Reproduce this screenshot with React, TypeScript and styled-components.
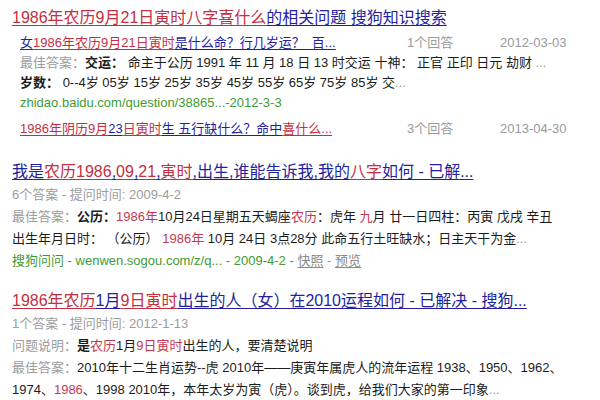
import React from 'react';
import styled, { createGlobalStyle } from 'styled-components';

const GlobalStyle = createGlobalStyle`
  html, body {
    margin: 0;
    padding: 0;
    background: #fff;
  }
  body {
    font-family: "Liberation Sans", "Noto Sans CJK SC", sans-serif;
  }
`;

const Page = styled.div`
  width: 600px;
  height: 400px;
  overflow: hidden;
  box-sizing: border-box;
  padding: 6px 0 0 12px;
`;

const Result = styled.section<{ $gap?: number }>`
  margin-top: ${p => p.$gap ?? 0}px;
`;

const Title = styled.a`
  display: block;
  font-size: 16px;
  line-height: 24px;
  white-space: nowrap;
  cursor: pointer;
`;

const Seg = styled.span<{ $hl?: boolean }>`
  color: ${p => (p.$hl ? '#c3303f' : '#231f9e')};
  text-decoration: underline;
  text-decoration-color: ${p => (p.$hl ? '#c3303f' : '#231f9e')};
  text-underline-offset: 2px;
`;

const Dots = styled.span`
  color: #9a9ac8;
  text-decoration: underline;
  text-underline-offset: 2px;
`;

const Nested = styled.div`
  padding-left: 8px;
`;

const SubRow = styled.div<{ $gap?: number }>`
  display: grid;
  grid-template-columns: 387px 93px auto;
  font-size: 13px;
  line-height: 20px;
  margin-top: ${p => p.$gap ?? 0}px;
  white-space: nowrap;
`;

const SubLink = styled.a`
  font-size: 13px;
  cursor: pointer;
`;

const Muted = styled.span`
  color: #9a9a9a;
`;

const Line = styled.div<{ $lh?: number }>`
  font-size: 13px;
  line-height: ${p => p.$lh ?? 22}px;
  color: #1c1c1c;
  white-space: nowrap;
  overflow: hidden;
`;

const Label = styled.span`
  color: #9c9c9c;
`;

const Hl = styled.span`
  color: #c23a52;
`;

const Strong = styled.b`
  font-weight: 700;
`;

const Url = styled.span`
  color: #3f9a33;
`;

const Snap = styled.a`
  color: #8a8a8a;
  text-decoration: underline;
  text-underline-offset: 2px;
`;

// "{..}" marks highlighted words, "*..*" bold words
const split = (text: string) => text.split(/(\{[^}]*\}|\*[^*]*\*)/).filter(Boolean);

const linkText = (text: string) =>
  split(text).map((part, i) =>
    part.startsWith('{') ? (
      <Seg key={i} $hl>{part.slice(1, -1)}</Seg>
    ) : part === '...' ? (
      <Dots key={i}>...</Dots>
    ) : (
      <Seg key={i}>{part}</Seg>
    )
  );

const bodyText = (text: string) =>
  split(text).map((part, i) => {
    if (part.startsWith('{')) return <Hl key={i}>{part.slice(1, -1)}</Hl>;
    if (part.startsWith('*')) return <Strong key={i}>{part.slice(1, -1)}</Strong>;
    return <React.Fragment key={i}>{part}</React.Fragment>;
  });

const App: React.FC = () => {
  return (
    <>
      <GlobalStyle />
      <Page>
        <Result>
          <Title>{linkText('{1986年农历9月21日寅时八字喜什么}的相关问题 搜狗知识搜索')}</Title>
          <Nested>
            <SubRow $gap={3}>
              <SubLink>{linkText('女{1986年农历9月21日寅时}是什么命？行几岁运？_百...')}</SubLink>
              <Muted>1个回答</Muted>
              <Muted>2012-03-03</Muted>
            </SubRow>
            <Line $lh={20}>
              <Label>最佳答案：</Label>
              {bodyText('*交运：* 命主于公历 1991 年 11 月 18 日 13 时交运 十神： 正官 正印 日元 劫财 ')}
              <Muted>...</Muted>
            </Line>
            <Line $lh={20}>
              {bodyText('*岁数：* 0--4岁 05岁 15岁 25岁 35岁 45岁 55岁 65岁 75岁 85岁 交')}
              <Muted>...</Muted>
            </Line>
            <Line $lh={20}>
              <Url>zhidao.baidu.com/question/38865...-2012-3-3</Url>
            </Line>
            <SubRow $gap={6}>
              <SubLink>{linkText('{1986年阴历9月}23{日寅时}生 五行缺什么？命中{喜什么...}')}</SubLink>
              <Muted>3个回答</Muted>
              <Muted>2013-04-30</Muted>
            </SubRow>
          </Nested>
        </Result>

        <Result $gap={21}>
          <Title>{linkText('我是{农历1986},{09},{21},{寅时},出生,谁能告诉我,我的{八字}如何 - 已解...')}</Title>
          <Line $lh={22}>
            <Label>6个答案 - 提问时间: 2009-4-2</Label>
          </Line>
          <Line>
            <Label>最佳答案：</Label>
            {bodyText('*公历：*{1986年}10月24日星期五天蝎座{农历}：虎年 {九}月 廿一日四柱：丙寅 戊戌 辛丑')}
          </Line>
          <Line>
            {bodyText('出生年月日时： （公历） {1986年} 10月 24日 3点28分 此命五行土旺缺水；日主天干为金')}
            <Muted>...</Muted>
          </Line>
          <Line>
            <Url>搜狗问问 - wenwen.sogou.com/z/q... - 2009-4-2 - </Url>
            <Snap>快照</Snap>
            <Muted> - </Muted>
            <Snap>预览</Snap>
          </Line>
        </Result>

        <Result $gap={17}>
          <Title>{linkText('{1986年农历}1月{9日寅时}出生的人（女）在2010运程如何 - 已解决 - 搜狗...')}</Title>
          <Line>
            <Label>1个答案 - 提问时间: 2012-1-13</Label>
          </Line>
          <Line>
            <Label>问题说明：</Label>
            {bodyText('*是*{农历}1月{9日寅时}出生的人，要清楚说明')}
          </Line>
          <Line>
            <Label>最佳答案：</Label>
            {bodyText('2010年十二生肖运势--虎 2010年——庚寅年属虎人的流年运程 1938、1950、1962、')}
          </Line>
          <Line>
            {bodyText('1974、{1986}、1998 2010年，本年太岁为寅（虎）。谈到虎，给我们大家的第一印象')}
            <Muted>...</Muted>
          </Line>
        </Result>
      </Page>
    </>
  );
};

export default App;
